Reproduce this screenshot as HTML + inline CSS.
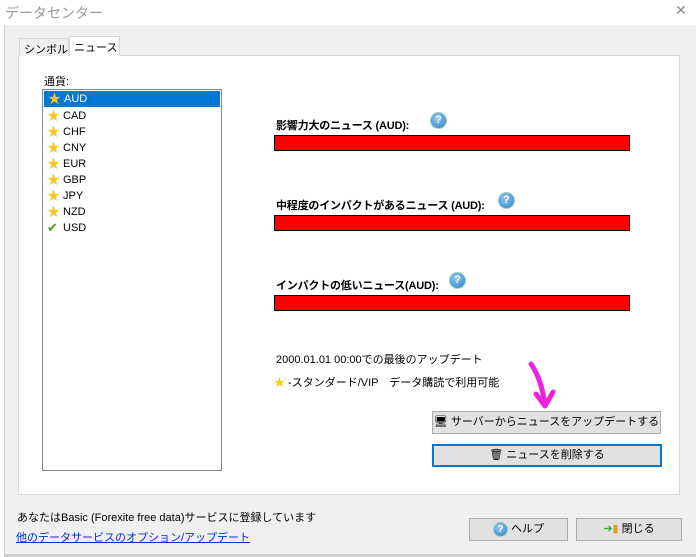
<!DOCTYPE html>
<html><head><meta charset="utf-8"><style>
*{margin:0;padding:0;box-sizing:border-box}
body{width:696px;height:557px;overflow:hidden;background:#f0f0f0;font-family:"Liberation Sans","Noto Sans CJK JP",sans-serif;font-size:12px;color:#000;position:relative}
.a{position:absolute;white-space:nowrap}
.title{left:0;top:0;width:696px;height:25px;background:#fff}
.panel{left:18px;top:55px;width:662px;height:440px;background:#fff;border:1px solid #d9d9d9}
.tab{top:36px;height:20px;border:1px solid #d9d9d9;border-bottom:none;padding:2px 4px;font-size:11px;text-align:center}
.list{left:42px;top:89px;width:180px;height:382px;border:1px solid #828790;background:#fff}
.it{height:16px;line-height:16px;padding-left:20px;position:relative;font-size:11px}
.it .s{position:absolute;left:4px;top:0;color:#f3c623;font-size:13px}
.sel{background:#0078d7;color:#fff;margin:1px}
.h{font-weight:bold;font-size:11px;left:276px;letter-spacing:-0.2px}
.bar{left:274px;width:356px;height:16px;background:#f00;border:1px solid #000}
.q{width:17px;height:17px;border-radius:50%;background:radial-gradient(circle at 40% 35%,#8cc8f0,#2f80c8);color:#fff;font-weight:bold;font-size:11px;text-align:center;line-height:15px;border:1px solid #9cc}
.btn{background:#e1e1e1;border:1px solid #adadad;text-align:center;font-size:11px;line-height:21px}
</style></head><body>
<div class="a" style="left:0;top:0;width:5px;height:557px;background:#fff;border-right:1px solid #ccc"></div>
<div class="a title"></div>
<div class="a" style="left:5px;top:3px;font-size:14px;color:#999">データセンター</div>
<div class="a" style="left:675px;top:2px;color:#888;font-size:14px">✕</div>
<div class="a panel"></div>
<div class="a tab" style="left:19px;top:38px;height:18px;width:50px;background:#f0f0f0">シンボル</div>
<div class="a tab" style="left:69px;background:#fff;height:20px;width:51px">ニュース</div>
<div class="a" style="left:44px;top:73px;font-size:11px">通貨:</div>
<div class="a list">
<div class="it sel"><span class="s">★</span>AUD</div>
<div class="it"><span class="s">★</span>CAD</div>
<div class="it"><span class="s">★</span>CHF</div>
<div class="it"><span class="s">★</span>CNY</div>
<div class="it"><span class="s">★</span>EUR</div>
<div class="it"><span class="s">★</span>GBP</div>
<div class="it"><span class="s">★</span>JPY</div>
<div class="it"><span class="s">★</span>NZD</div>
<div class="it"><span class="s" style="color:#4a9a1a">✔</span>USD</div>
</div>
<div class="a h" style="top:117px">影響力大のニュース (AUD):</div>
<div class="a q" style="left:430px;top:112px">?</div>
<div class="a bar" style="top:135px"></div>
<div class="a h" style="top:197px">中程度のインパクトがあるニュース (AUD):</div>
<div class="a q" style="left:498px;top:192px">?</div>
<div class="a bar" style="top:215px"></div>
<div class="a h" style="top:277px">インパクトの低いニュース(AUD):</div>
<div class="a q" style="left:449px;top:272px">?</div>
<div class="a bar" style="top:295px"></div>
<div class="a" style="left:276px;top:351px;font-size:11px">2000.01.01 00:00での最後のアップデート</div>
<div class="a" style="left:274px;top:374px;font-size:11px"><span style="color:#f3d000">★</span> -スタンダード/VIP　データ購読で利用可能</div>
<svg class="a" style="left:525px;top:360px" width="32" height="52"><path d="M6 4 Q17 20 20 46 M11 34 L20 46 L28 32" stroke="#f020e0" stroke-width="5" fill="none" stroke-linecap="round" stroke-linejoin="round"/></svg>
<div class="a btn" style="left:432px;top:411px;width:229px;height:23px">🖥 サーバーからニュースをアップデートする</div>
<div class="a btn" style="left:432px;top:444px;width:230px;height:23px;border:2px solid #0078d7;line-height:19px">🗑 ニュースを削除する</div>
<div class="a" style="left:17px;top:509px;font-size:11px">あなたはBasic (Forexite free data)サービスに登録しています</div>
<div class="a" style="left:16px;top:529px;font-size:11px;color:#0033cc;text-decoration:underline">他のデータサービスのオプション/アップデート</div>
<div class="a btn" style="left:469px;top:518px;width:99px;height:23px"><span class="q" style="display:inline-block;width:15px;height:15px;line-height:13px;vertical-align:middle;font-size:10px">?</span> ヘルプ</div>
<div class="a btn" style="left:576px;top:518px;width:106px;height:23px"><span style="color:#3a3">➜</span><span style="color:#d9a020">▮</span> 閉じる</div>
<div class="a" style="left:5px;top:554px;width:691px;height:3px;background:#d0d0d0"></div>
</body></html>
